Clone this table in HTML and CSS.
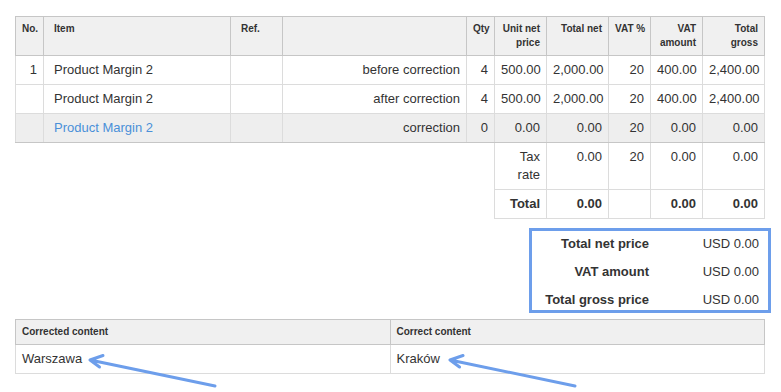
FILE: index.html
```html
<!DOCTYPE html>
<html>
<head>
	<link rel="stylesheet" href="styles.css">
</head>
<body>
<div class="page">
	<table class="items">
		<colgroup>
			<col class="c-no"><col class="c-item"><col class="c-ref"><col class="c-desc"><col class="c-qty">
			<col class="c-unit"><col class="c-net"><col class="c-rate"><col class="c-vat"><col class="c-gross">
		</colgroup>
		<thead>
			<tr>
				<th>No.</th>
				<th class="txt">Item</th>
				<th class="txt">Ref.</th>
				<th></th>
				<th>Qty</th>
				<th>Unit net price</th>
				<th>Total net</th>
				<th class="nowrap">VAT %</th>
				<th>VAT amount</th>
				<th>Total gross</th>
			</tr>
		</thead>
		<tbody>
			<tr>
				<td>1</td>
				<td class="txt">Product Margin 2</td>
				<td></td>
				<td>before correction</td>
				<td>4</td>
				<td>500.00</td>
				<td>2,000.00</td>
				<td>20</td>
				<td>400.00</td>
				<td>2,400.00</td>
			</tr>
			<tr>
				<td></td>
				<td class="txt">Product Margin 2</td>
				<td></td>
				<td>after correction</td>
				<td>4</td>
				<td>500.00</td>
				<td>2,000.00</td>
				<td>20</td>
				<td>400.00</td>
				<td>2,400.00</td>
			</tr>
			<tr class="diff">
				<td></td>
				<td class="txt"><a href="#">Product Margin 2</a></td>
				<td></td>
				<td>correction</td>
				<td>0</td>
				<td>0.00</td>
				<td>0.00</td>
				<td>20</td>
				<td>0.00</td>
				<td>0.00</td>
			</tr>
			<tr class="sum">
				<td class="blank first" colspan="5"></td>
				<td>Tax rate</td>
				<td>0.00</td>
				<td>20</td>
				<td>0.00</td>
				<td>0.00</td>
			</tr>
			<tr class="sum total">
				<td class="blank" colspan="5"></td>
				<td>Total</td>
				<td>0.00</td>
				<td></td>
				<td>0.00</td>
				<td>0.00</td>
			</tr>
		</tbody>
	</table>

	<div class="summary-row">
		<div class="summary">
			<span class="lbl">Total net price</span><span>USD 0.00</span>
			<span class="lbl">VAT amount</span><span>USD 0.00</span>
			<span class="lbl">Total gross price</span><span>USD 0.00</span>
		</div>
	</div>

	<table class="changes">
		<thead>
			<tr>
				<th>Corrected content</th>
				<th>Correct content</th>
			</tr>
		</thead>
		<tbody>
			<tr>
				<td>Warszawa</td>
				<td>Kraków</td>
			</tr>
		</tbody>
	</table>
</div>

<!-- pointers to the changed values -->
<svg class="marks" width="781" height="392" viewBox="0 0 781 392">
	<g fill="none" stroke="#6d9eeb" stroke-width="3" stroke-linecap="round" stroke-linejoin="round">
		<path d="M215 386 L90 360 M103 355.5 L90 360 L99.5 367"/>
		<path d="M575 386 L450 360 M463 355.5 L450 360 L459.5 367"/>
	</g>
</svg>
</body>
</html>
```

FILE: styles.css
```css
body {
  margin: 0;
  position: relative;
  min-height: 100vh;
  font-family: "Liberation Sans", Arial, sans-serif;
  font-size: 13px;
  color: #333;
  background: #fff;
}

.page {
  padding: 16px 0 0 15px;
  width: 750px;
}

table {
  border-collapse: collapse;
  table-layout: fixed;
  width: 750px;
}

th, td {
  border: 1px solid #dcdcdc;
  padding: 5px 6px;
  vertical-align: top;
  text-align: right;
}

th {
  background: #f0f0f0;
  font-size: 10px;
  line-height: 14px;
  font-weight: bold;
  border-color: #c6c6c6;
}

td {
  line-height: 18px;
}

.txt {
  text-align: left;
  padding-left: 10px;
}

.nowrap {
  white-space: nowrap;
}

.c-no { width: 28px; }
.c-item { width: 187px; }
.c-ref { width: 52px; }
.c-desc { width: 184px; }
.c-qty { width: 28px; }
.c-unit { width: 52px; }
.c-net { width: 62px; }
.c-rate { width: 42px; }
.c-vat { width: 52px; }
.c-gross { width: 62px; }

.items tbody tr:nth-child(3) td {
  border-bottom-color: #c6c6c6;
}

.diff td {
  background: #eee;
}

.diff a {
  color: #4a90d9;
  text-decoration: none;
}

td.blank {
  border: none;
}

td.blank.first {
  border-top: 1px solid #c6c6c6;
}

.total td {
  font-weight: bold;
}

.summary-row {
  display: flex;
  justify-content: flex-end;
  margin: 9px -6px 6px 0;
}

.summary {
  display: grid;
  grid-template-columns: 109px 110px;
  row-gap: 10px;
  justify-items: end;
  line-height: 18px;
  padding: 4px 9px 1px 8px;
  border: 3px solid #6d9eeb;
  width: 219px;
}

.summary .lbl {
  font-weight: bold;
}

.changes th, .changes td {
  text-align: left;
}

.marks {
  position: absolute;
  top: 0;
  left: 0;
  pointer-events: none;
}
```
